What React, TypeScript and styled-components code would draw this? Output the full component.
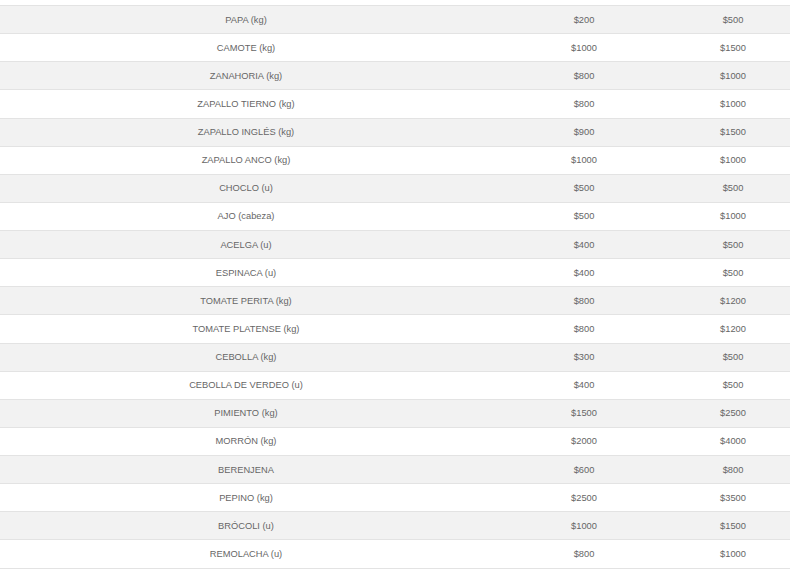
import styled, { createGlobalStyle } from "styled-components";

interface Item {
  name: string;
  min: string;
  max: string;
}

const items: Item[] = [
  { name: "PAPA (kg)", min: "$200", max: "$500" },
  { name: "CAMOTE (kg)", min: "$1000", max: "$1500" },
  { name: "ZANAHORIA (kg)", min: "$800", max: "$1000" },
  { name: "ZAPALLO TIERNO (kg)", min: "$800", max: "$1000" },
  { name: "ZAPALLO INGLÉS (kg)", min: "$900", max: "$1500" },
  { name: "ZAPALLO ANCO (kg)", min: "$1000", max: "$1000" },
  { name: "CHOCLO (u)", min: "$500", max: "$500" },
  { name: "AJO (cabeza)", min: "$500", max: "$1000" },
  { name: "ACELGA (u)", min: "$400", max: "$500" },
  { name: "ESPINACA (u)", min: "$400", max: "$500" },
  { name: "TOMATE PERITA (kg)", min: "$800", max: "$1200" },
  { name: "TOMATE PLATENSE (kg)", min: "$800", max: "$1200" },
  { name: "CEBOLLA (kg)", min: "$300", max: "$500" },
  { name: "CEBOLLA DE VERDEO (u)", min: "$400", max: "$500" },
  { name: "PIMIENTO (kg)", min: "$1500", max: "$2500" },
  { name: "MORRÓN (kg)", min: "$2000", max: "$4000" },
  { name: "BERENJENA", min: "$600", max: "$800" },
  { name: "PEPINO (kg)", min: "$2500", max: "$3500" },
  { name: "BRÓCOLI (u)", min: "$1000", max: "$1500" },
  { name: "REMOLACHA (u)", min: "$800", max: "$1000" },
];

function App() {
  return (
    <>
      <GlobalStyle />
      <Table>
        <tbody>
          {items.map((item, i) => (
            <Row key={item.name} $striped={i % 2 === 0}>
              <NameCell>{item.name}</NameCell>
              <PriceCell>{item.min}</PriceCell>
              <MaxCell>{item.max}</MaxCell>
            </Row>
          ))}
        </tbody>
      </Table>
    </>
  );
}

export default App;

const GlobalStyle = createGlobalStyle`
  body {
    margin: 0;
    background: #fff;
    font-family: "Liberation Sans", Arial, sans-serif;
  }
`;

const Table = styled.table`
  width: 790px;
  margin-top: 5px;
  border-collapse: collapse;
  table-layout: fixed;
  font-size: 9.3px;
  color: #666;
`;

const Row = styled.tr<{ $striped: boolean }>`
  background: ${(p) => (p.$striped ? "#f2f2f2" : "#fff")};
  border-top: 1px solid #e3e3e3;

  &:last-child {
    border-bottom: 1px solid #e3e3e3;
  }
`;

const Cell = styled.td`
  height: 27.14px;
  padding: 0;
  text-align: center;
  vertical-align: middle;
  line-height: 12px;
  white-space: nowrap;
`;

const NameCell = styled(Cell)`
  width: 492px;
`;

const PriceCell = styled(Cell)`
  width: 184px;
`;

const MaxCell = styled(Cell)`
  width: 114px;
`;
